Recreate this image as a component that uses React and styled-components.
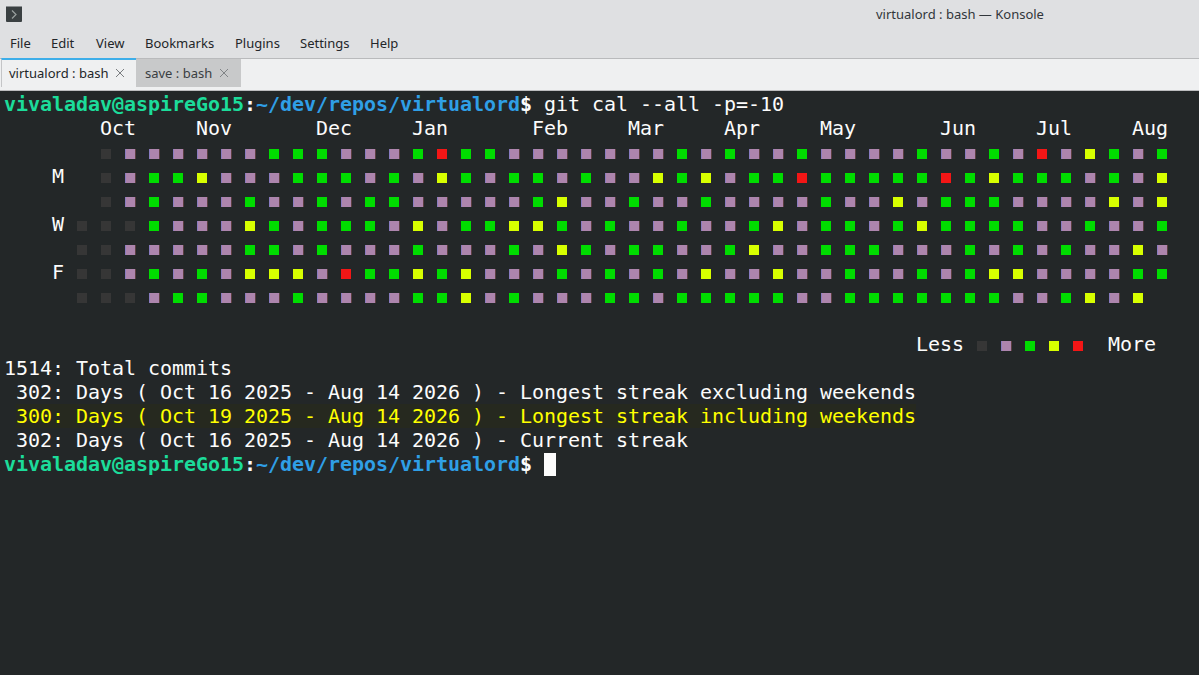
import React from "react";
import styled, { createGlobalStyle } from "styled-components";

const GlobalStyle = createGlobalStyle`
  html, body {
    margin: 0;
    padding: 0;
    height: 100%;
    overflow: hidden;
    background: #232728;
  }
  #root {
    height: 100%;
  }
`;

const Window = styled.div`
  display: flex;
  flex-direction: column;
  width: 1199px;
  height: 675px;
  overflow: hidden;
  font-family: "Noto Sans", sans-serif;
  font-size: 13px;
  color: #232629;
`;

const TitleBar = styled.div`
  display: flex;
  align-items: center;
  height: 28px;
  padding-left: 6px;
  background: #dfe0e2;
  flex: none;
`;

const TitleText = styled.div`
  margin-left: 854px;
  color: #31363b;
  white-space: nowrap;
`;

const MenuBar = styled.div`
  display: flex;
  align-items: center;
  height: 30px;
  padding: 0 0 1px 10px;
  box-sizing: border-box;
  background: #dfe0e2;
  flex: none;
`;

const MenuItem = styled.div`
  width: ${(p) => p.$width}px;
  flex: none;
`;

const TabBar = styled.div`
  display: flex;
  align-items: stretch;
  height: 33px;
  padding: 0 0 3px 1px;
  box-sizing: border-box;
  background: #eff0f1;
  border-top: 1px solid #b9babc;
  border-bottom: 1px solid #bcbdbf;
  flex: none;
`;

const Tab = styled.div`
  display: flex;
  align-items: center;
  box-sizing: border-box;
  width: ${(p) => p.$width}px;
  padding: 0 0 1px ${(p) => p.$inset}px;
  margin-top: ${(p) => (p.$active ? -1 : 0)}px;
  background: ${(p) => (p.$active ? "#eff0f1" : "#c8c9ca")};
  border-top: ${(p) => (p.$active ? "2px solid #3daee9" : "none")};
  border-left: ${(p) => (p.$active ? "1px solid #c4c5c7" : "none")};
  color: ${(p) => (p.$active ? "#232629" : "#3a3e42")};
  white-space: nowrap;
`;

const CloseIcon = styled.svg`
  margin-left: 7px;
  flex: none;
`;

const Terminal = styled.div`
  flex: 1;
  padding: 1px 0 0 4px;
  background: #232728;
  color: #fcfcfc;
  font-family: "DejaVu Sans Mono", monospace;
  font-size: 20px;
  letter-spacing: -0.04px;
  line-height: 24px;
`;

const Line = styled.div`
  display: flex;
  height: 24px;
  white-space: pre;
  color: ${(p) => p.$color || "inherit"};
`;

const Highlight = styled.span`
  margin-left: 12px;
  background: #26291f;
`;

const Strong = styled.span`
  font-weight: bold;
  color: ${(p) => p.$color};
`;

const Cursor = styled.span`
  display: block;
  width: 12px;
  height: 23px;
  margin: 1px 0 0 12px;
  background: #fcfcfc;
`;

const DayLabel = styled.div`
  width: 72px;
  flex: none;
  white-space: pre;
`;

const Cell = styled.div`
  width: 24px;
  height: 24px;
  flex: none;
`;

const Square = styled.div`
  width: 10px;
  height: 10px;
  margin: 9px 0 0 1px;
  background: ${(p) => p.$color};
  box-shadow: ${(p) => p.$fringe || "none"};
`;

const LegendRow = styled(Line)`
  padding-left: 912px;
`;

const BlankLine = styled.div`
  height: 24px;
`;

const COLORS = {
  D: "#363636",
  P: "#ad85ad",
  G: "#00dc00",
  Y: "#d7ff00",
  R: "#f31616",
};

// purple squares carry the colour fringe of the terminal's subpixel rendering
const FRINGE = {
  P: "inset 1px 0 #8a7cc0, 1px 0 #5a3e40",
};

// one string per weekday, one letter per week column, "." means no day
const WEEKS = [
  ".DPPPPPPGGGPPP" + "GRGGPPPPPPPGPGPP" + "G" + "PPPPGPPGPRPYGPG",
  ".DPGGYPPPGGGPG" + "PYGPGGPGPPYGYPGG" + "R" + "GGGGGRGYGGGPGPY",
  ".DPGPPPGPPGPGG" + "PPPPPGYPPGPPGPPP" + "P" + "GPPYPGGGPPPPYPY",
  "DDDGPPPYGPGGGP" + "YPGGYYGPGPPGPPGY" + "P" + "GGPGYGGGGPPGPPG",
  "DDPPPPPGGPGPPP" + "GPPPGPYGPGGPPGYP" + "P" + "GGGPPPGPGPGPPYP",
  "DDPGPGPYYYPRGG" + "YGYPPPGPGPGPYPPY" + "P" + "PGPPGPGYYPPPPGG",
  "DDDPGGPPPGPPPP" + "GGYPGPPPGGPGGGGG" + "P" + "PGGGGGGGPPGYPY.",
];

const MONTH_LINE =
  "        Oct     Nov       Dec     Jan       Feb     Mar     Apr     May       Jun     Jul     Aug";
const DAYS = ["", "M", "", "W", "", "F", ""];
const LEGEND = ["D", "P", "G", "Y", "R"];
const MENU = [
  ["File", 41],
  ["Edit", 45],
  ["View", 49],
  ["Bookmarks", 90],
  ["Plugins", 65],
  ["Settings", 70],
  ["Help", 40],
];
const PROMPT_GREEN = "#1cdc9a";
const PROMPT_BLUE = "#2f9fe6";

const KonsoleIcon = () => (
  <svg width="16" height="16" viewBox="0 0 16 16">
    <rect x="0" y="0" width="16" height="16" rx="1" fill="#3a4042" />
    <rect x="0" y="0" width="16" height="1" fill="#8b8f91" />
    <path d="M6 4.5 L10 8.5 L6 12.5" fill="none" stroke="#9aa09f" strokeWidth="1.2" />
  </svg>
);

const TabClose = ({ color }) => (
  <CloseIcon width="10" height="10" viewBox="0 0 10 10">
    <path d="M1 1 L9 9 M9 1 L1 9" stroke={color} strokeWidth="1" fill="none" />
  </CloseIcon>
);

const Prompt = () => (
  <>
    <Strong $color={PROMPT_GREEN}>vivaladav@aspireGo15</Strong>
    <Strong $color="#fcfcfc">:</Strong>
    <Strong $color={PROMPT_BLUE}>~/dev/repos/virtualord</Strong>
    <Strong $color="#fcfcfc">$</Strong>
  </>
);

const App = () => (
  <Window>
    <GlobalStyle />
    <TitleBar>
      <KonsoleIcon />
      <TitleText>virtualord : bash — Konsole</TitleText>
    </TitleBar>
    <MenuBar>
      {MENU.map(([label, width]) => (
        <MenuItem key={label} $width={width}>
          {label}
        </MenuItem>
      ))}
    </MenuBar>
    <TabBar>
      <Tab $active $width={135} $inset={7}>
        virtualord : bash
        <TabClose color="#7a7d80" />
      </Tab>
      <Tab $width={105} $inset={9}>
        save : bash
        <TabClose color="#808386" />
      </Tab>
    </TabBar>
    <Terminal>
      <Line>
        <Prompt /> git cal --all -p=-10
      </Line>
      <Line>{MONTH_LINE}</Line>
      {WEEKS.map((row, r) => (
        <Line key={r}>
          <DayLabel>{"    " + DAYS[r]}</DayLabel>
          {row.split("").map((c, i) => (
            <Cell key={i}>{COLORS[c] && <Square $color={COLORS[c]} $fringe={FRINGE[c]} />}</Cell>
          ))}
        </Line>
      ))}
      <BlankLine />
      <LegendRow>
        {"Less "}
        {LEGEND.map((c) => (
          <Cell key={c}>
            <Square $color={COLORS[c]} $fringe={FRINGE[c]} />
          </Cell>
        ))}
        {" More"}
      </LegendRow>
      <Line>1514: Total commits</Line>
      <Line> 302: Days ( Oct 16 2025 - Aug 14 2026 ) - Longest streak excluding weekends</Line>
      <Line $color="#ffff00">
        <Highlight>300: Days ( Oct 19 2025 - Aug 14 2026 ) - Longest streak including weekends</Highlight>
      </Line>
      <Line> 302: Days ( Oct 16 2025 - Aug 14 2026 ) - Current streak</Line>
      <Line>
        <Prompt />
        <Cursor />
      </Line>
    </Terminal>
  </Window>
);

export default App;
